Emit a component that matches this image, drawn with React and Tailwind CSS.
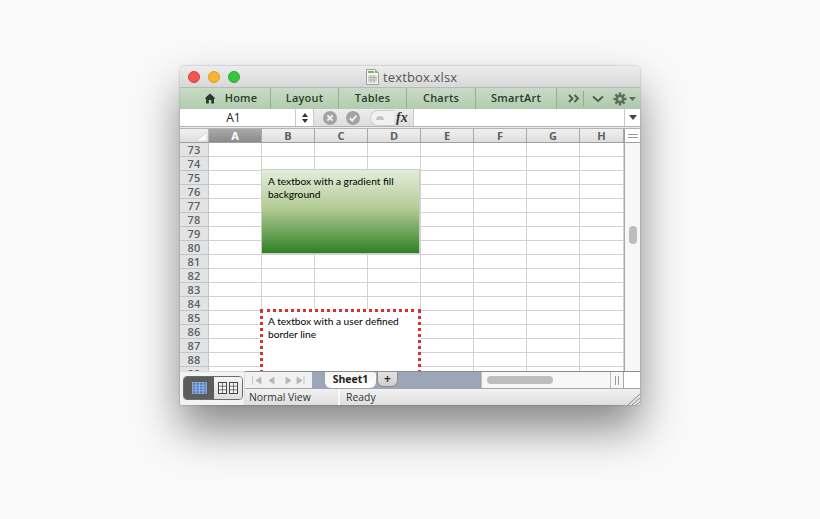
const cols = [
  ["A", 53],
  ["B", 53],
  ["C", 53],
  ["D", 53],
  ["E", 53],
  ["F", 53],
  ["G", 53],
  ["H", 44],
];
const rows = [73, 74, 75, 76, 77, 78, 79, 80, 81, 82, 83, 84, 85, 86, 87, 88, 89];
const tabs = [
  ["Home", 90],
  ["Layout", 68],
  ["Tables", 68],
  ["Charts", 69],
  ["SmartArt", 81],
];
const ui = { fontFamily: '"Open Sans", "DejaVu Sans", sans-serif' };
const calibri = { fontFamily: 'Lato, "Open Sans", sans-serif' };

function Home() {
  return (
    <svg width="12" height="11" viewBox="0 0 12 11" className="mr-[9px]">
      <path d="M6 0.5 L0.5 5.6 L2 5.6 L2 10.5 L4.8 10.5 L4.8 7 L7.2 7 L7.2 10.5 L10 10.5 L10 5.6 L11.5 5.6 Z" fill="#2e3a30" />
    </svg>
  );
}

function Gear() {
  return (
    <svg width="14" height="14" viewBox="0 0 14 14">
      <g stroke="#5f6b60" strokeWidth="2.4">
        <path d="M7 0.5V13.5M0.5 7H13.5M2.4 2.4L11.6 11.6M11.6 2.4L2.4 11.6" />
      </g>
      <circle cx="7" cy="7" r="4.4" fill="#5f6b60" />
      <circle cx="7" cy="7" r="2" fill="#b4cdb0" />
    </svg>
  );
}

function DocIcon() {
  return (
    <svg width="13" height="16" viewBox="0 0 13 16">
      <path d="M0.5 0.5H9L12.5 4V15.5H0.5Z" fill="#f4f6f2" stroke="#9aa39a" />
      <path d="M9 0.5V4H12.5Z" fill="#7fb27a" />
      <path d="M2 2H8V4H2Z" fill="#7fae79" />
      <path d="M2 6H11V14H2Z" fill="#dfe5dc" />
      <path d="M2 8.5H11M2 11H11M5 6V14M8 6V14" stroke="#97a396" strokeWidth="0.7" />
    </svg>
  );
}

function CircleMark({ check }) {
  return (
    <svg width="14" height="14" viewBox="0 0 14 14">
      <circle cx="7" cy="7" r="7" fill="#a3a3a3" />
      {check ? (
        <path d="M3.8 7.2L6.2 9.6L10.4 4.6" fill="none" stroke="#f2f2f2" strokeWidth="2" />
      ) : (
        <path d="M4.4 4.4L9.6 9.6M9.6 4.4L4.4 9.6" fill="none" stroke="#f2f2f2" strokeWidth="2" />
      )}
    </svg>
  );
}

function Titlebar() {
  return (
    <div className="h-[22px] flex items-center relative rounded-t-[5px] bg-gradient-to-b from-[#ececec] to-[#d8d8d8] border-b border-[#b9b9b9] pl-[8px]">
      <span className="w-[12px] h-[12px] rounded-full bg-[#f2564f] border border-[#d9423c]" />
      <span className="w-[12px] h-[12px] rounded-full bg-[#f8b531] border border-[#dd9d22] ml-[8px]" />
      <span className="w-[12px] h-[12px] rounded-full bg-[#35c63f] border border-[#2aab33] ml-[8px]" />
      <div className="flex items-center ml-[126px]">
        <DocIcon />
        <span className="ml-[4px] pt-[2px] text-[13px] tracking-[0.15px] text-[#555]" style={ui}>textbox.xlsx</span>
      </div>
    </div>
  );
}

function Toolbar() {
  return (
    <div className="h-[21px] flex items-stretch bg-gradient-to-b from-[#c5d9c2] to-[#adc8aa] pl-px" style={ui}>
      {tabs.map(([t, w], i) => (
        <div
          key={t}
          className={
            "flex items-center justify-center border-r border-[#93b090] bg-gradient-to-b from-[#c8dbc5] to-[#b1ccae] text-[11px] font-semibold tracking-[0.2px] text-[#2d3a2e] " +
            (i === 0 ? "pl-[10px]" : "")
          }
          style={{ width: w }}
        >
          {i === 0 && <Home />}
          {t}
        </div>
      ))}
      <div className="flex items-center pl-[11px]">
        <svg width="12" height="9" viewBox="0 0 12 9">
          <path d="M1 1L4.5 4.5L1 8M6.5 1L10 4.5L6.5 8" fill="none" stroke="#4e5a4f" strokeWidth="1.8" />
        </svg>
      </div>
      <div className="w-px my-[3px] ml-[3px] bg-[#8fae8c]" />
      <div className="flex items-center ml-[8px]">
        <svg width="12" height="8" viewBox="0 0 12 8">
          <path d="M1 1.5L6 6L11 1.5" fill="none" stroke="#4e5a4f" strokeWidth="1.8" />
        </svg>
      </div>
      <div className="flex items-center ml-[9px]">
        <Gear />
        <svg width="7" height="4" viewBox="0 0 7 4" className="ml-[2px]">
          <path d="M0 0H7L3.5 4Z" fill="#5f6b60" />
        </svg>
      </div>
    </div>
  );
}

function FormulaBar() {
  return (
    <div className="h-[20px] flex flex-col">
      <div className="h-[17px] flex items-stretch bg-[#e4e4e4]">
        <div className="w-[115px] bg-white flex items-center justify-center pr-[8px] text-[12px] text-[#222]" style={ui}>A1</div>
        <div className="w-[19px] bg-white border-x border-[#c9c9c9] flex flex-col items-center justify-center gap-[2px]">
          <svg width="6" height="4" viewBox="0 0 6 4"><path d="M3 0L6 4H0Z" fill="#333" /></svg>
          <svg width="6" height="4" viewBox="0 0 6 4"><path d="M0 0H6L3 4Z" fill="#333" /></svg>
        </div>
        <div className="w-[99px] bg-gradient-to-b from-[#ededed] to-[#dedede] flex items-center pl-[9px]">
          <CircleMark />
          <div className="ml-[9px]"><CircleMark check /></div>
          <div className="ml-[10px] w-[24px] h-[16px] rounded-l-full border-l border-y border-[#cfcfcf] bg-[#f1f1f1] flex items-center justify-center pr-[6px]">
            <div className="w-[8px] h-[4px] rounded-t-full bg-[#c4c4c4]" />
          </div>
          <span className="ml-[2px] text-[14px] italic font-bold text-[#333]" style={{ fontFamily: '"Liberation Serif", serif' }}>fx</span>
        </div>
        <div className="w-[212px] bg-white border-x border-[#c9c9c9]" />
        <div className="w-[15px] bg-white flex items-center justify-center">
          <svg width="8" height="5" viewBox="0 0 8 5"><path d="M0 0H8L4 5Z" fill="#444" /></svg>
        </div>
      </div>
      <div className="h-[3px] bg-[#ececec] border-y border-[#b3b3b3]" />
    </div>
  );
}

function ColumnHeaders() {
  return (
    <div className="h-[14px] flex bg-gradient-to-b from-[#f0f0f0] to-[#dedede] border-b border-[#9f9f9f] text-[11px] font-bold leading-none text-[#5a5f66]" style={ui}>
      <div className="w-[29px] flex items-end justify-end border-r border-[#b5b5b5] pr-px pb-px">
        <svg width="11" height="9" viewBox="0 0 11 9"><path d="M11 0V9H0Z" fill="#fafafa" stroke="#bdbdbd" strokeWidth="0.5" /></svg>
      </div>
      {cols.map(([c, w], i) => (
        <div
          key={c}
          className={
            "flex items-center justify-center border-r border-[#a8a8a8] " +
            (i === 0 ? "bg-gradient-to-b from-[#a9a9a9] to-[#8b8b8b] text-white" : "")
          }
          style={{ width: w }}
        >
          {c}
        </div>
      ))}
      <div className="w-[16px] bg-white border-l border-[#9f9f9f] flex flex-col items-center justify-center gap-[2px]">
        <div className="w-[10px] h-px bg-[#9a9a9a]" />
        <div className="w-[10px] h-px bg-[#9a9a9a]" />
      </div>
    </div>
  );
}

function Sheet() {
  return (
    <div className="flex h-[228px]">
      <div className="relative w-[444px] overflow-hidden">
        {rows.map((r) => (
          <div key={r} className="h-[14px] flex">
            <div className="w-[29px] flex items-center justify-center bg-[#e3e3e3] border-r border-b border-[#c4c4c4] text-[11px] leading-none font-semibold tracking-[0.2px] text-[#5a6065]" style={ui}>
              {r}
            </div>
            {cols.map(([c, w]) => (
              <div key={c} className="border-r border-b border-[#d2d2d2] bg-white" style={{ width: w }} />
            ))}
          </div>
        ))}
        <div
          className="absolute left-[81px] top-[26px] w-[159px] h-[85px] border border-[#c8d0c4] bg-gradient-to-b from-[#e2eeda] via-[#b5cc97] via-45% to-[#2c8124] pl-[6px] pt-[5px] text-[10.2px] leading-[13px] text-black"
          style={calibri}
        >
          A textbox with a gradient fill<br />background
        </div>
        <div
          className="absolute left-[80px] top-[166px] w-[161px] h-[90px] border-[3px] border-dotted border-[#dc2f34] bg-white pl-[5px] pt-[3px] text-[10.2px] leading-[13px] text-black"
          style={calibri}
        >
          A textbox with a user defined<br />border line
        </div>
      </div>
      <div className="w-[16px] bg-[#f7f7f7] border-l border-[#a8a8a8] pt-[83px] pl-[4px]">
        <div className="w-[8px] h-[18px] rounded-full bg-[#bdbdbd]" />
      </div>
    </div>
  );
}

function Bottom() {
  return (
    <div className="flex h-[34px] rounded-b-[2px] overflow-hidden">
      <div className="w-[65px] bg-[#f3f3f3] border-t border-[#dcdcdc] border-r pt-[4px] pl-[3px]">
        <div className="flex w-[60px] h-[24px] rounded-[4px] border border-[#6c6c6c] overflow-hidden">
          <div className="w-[30px] bg-[#5c5c5c] flex items-center justify-center">
            <svg width="15" height="12" viewBox="0 0 15 12">
              <rect x="0.5" y="0.5" width="14" height="11" fill="#4f7fc4" stroke="#a9c2e6" strokeWidth="0.6" />
              <path d="M0.5 3.3H14.5M0.5 6H14.5M0.5 8.8H14.5M4 0.5V11.5M7.5 0.5V11.5M11 0.5V11.5" stroke="#bcd0ee" strokeWidth="0.6" />
            </svg>
          </div>
          <div className="flex-1 bg-gradient-to-b from-[#f6f6f6] to-[#dcdcdc] flex items-center justify-center gap-[2px]">
            {[0, 1].map((k) => (
              <svg key={k} width="9" height="12" viewBox="0 0 9 12">
                <rect x="0.5" y="0.5" width="8" height="11" fill="#f5f5f5" stroke="#444" />
                <path d="M0.5 4.2H8.5M0.5 7.8H8.5M4.5 0.5V11.5" stroke="#555" strokeWidth="0.8" />
              </svg>
            ))}
          </div>
        </div>
      </div>
      <div className="flex-1 flex flex-col">
        <div className="h-[17px] flex border-t border-[#8d8d8d]">
          <div className="w-[67px] bg-[#f1f1f1] flex items-center pl-[7px] pt-px">
            <svg width="54" height="9" viewBox="0 0 54 9">
              <path d="M0.5 0.5V8.5M9 1L4 4.5L9 8ZM22 1L17 4.5L22 8ZM34 1L39 4.5L34 8ZM45 1L50 4.5L45 8ZM52 0.5V8.5" fill="#b8b8b8" stroke="#b8b8b8" strokeWidth="0.8" />
            </svg>
          </div>
          <div className="w-[169px] bg-[#9ba6b9] flex pl-[13px]">
            <div className="w-[51px] h-[16px] bg-gradient-to-b from-[#f4f4f4] to-[#ffffff] rounded-b-[6px] rounded-tr-[2px] flex items-center justify-center text-[10.5px] font-bold text-[#222]" style={ui}>
              Sheet1
            </div>
            <div className="w-[21px] h-[15px] ml-px bg-gradient-to-b from-[#e2e2e2] to-[#cfcfcf] rounded-b-[6px] border border-t-0 border-[#8d8d8d] flex items-center justify-center text-[12px] font-bold leading-none text-[#333]" style={ui}>
              +
            </div>
          </div>
          <div className="w-[130px] bg-[#f7f7f7] border-x border-[#bdbdbd] flex items-center pl-[5px]">
            <div className="w-[66px] h-[8px] rounded-full bg-[#bdbdbd]" />
          </div>
          <div className="w-[13px] bg-[#f7f7f7] border-r border-[#a8a8a8] flex items-center justify-center gap-[2px]">
            <div className="w-px h-[9px] bg-[#999]" />
            <div className="w-px h-[9px] bg-[#999]" />
          </div>
          <div className="flex-1 bg-white" />
        </div>
        <div className="h-[17px] flex items-stretch bg-gradient-to-b from-[#f1f1f1] to-[#dfdfdf] border-t border-[#a5a5a5] text-[10.4px] text-[#333] relative" style={ui}>
          <div className="w-[95px] pl-[4px] pt-px flex items-center border-r-2 border-[#f8f8f8]">Normal View</div>
          <div className="pl-[6px] pt-px flex items-center">Ready</div>
          <svg width="13" height="12" viewBox="0 0 13 12" className="absolute right-0 bottom-0">
            <path d="M1 12L13 1M5 12L13 5M9 12L13 9" stroke="#888" strokeWidth="1" />
          </svg>
        </div>
      </div>
    </div>
  );
}

export default function App() {
  return (
    <div className="w-[820px] h-[519px] bg-[#f9f9f9] pt-[66px] pl-[180px] overflow-hidden">
      <div className="w-[460px] h-[339px] flex flex-col bg-white rounded-t-[5px] rounded-b-[2px] shadow-[0_24px_44px_rgba(0,0,0,0.46),0_0_2px_rgba(0,0,0,0.35)]">
        <Titlebar />
        <Toolbar />
        <FormulaBar />
        <ColumnHeaders />
        <Sheet />
        <Bottom />
      </div>
    </div>
  );
}
